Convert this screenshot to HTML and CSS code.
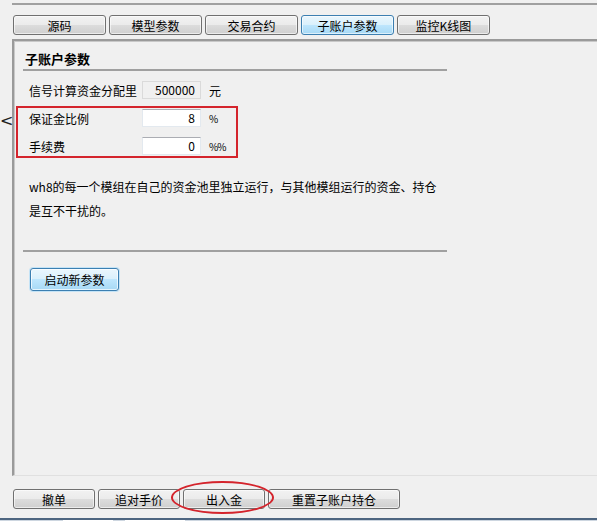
FILE: index.html
```html
<!DOCTYPE html>
<html lang="zh-CN">
<head>
<meta charset="utf-8">
<title>子账户参数</title>
<link rel="stylesheet" href="styles.css">
</head>
<body>
<div class="window">
  <div class="topline"></div>
  <div class="tabs">
    <button class="btn tab">源码</button>
    <button class="btn tab">模型参数</button>
    <button class="btn tab">交易合约</button>
    <button class="btn tab active">子账户参数</button>
    <button class="btn tab">监控K线图</button>
  </div>
  <div class="panel">
    <div class="section">
      <div class="heading">子账户参数</div>
      <div class="sep"></div>
      <div class="rows">
        <div class="row">
          <span class="label">信号计算资金分配里</span>
          <span class="input readonly">500000</span>
          <span class="unit">元</span>
        </div>
        <div class="row">
          <span class="label">保证金比例</span>
          <span class="input">8</span>
          <span class="unit pct">%</span>
        </div>
        <div class="row">
          <span class="label">手续费</span>
          <span class="input">0</span>
          <span class="unit pct">%%</span>
        </div>
      </div>
      <p class="desc">wh8的每一个模组在自己的资金池里独立运行，与其他模组运行的资金、持仓<br>是互不干扰的。</p>
      <div class="sep sep2"></div>
      <button class="btn blue">启动新参数</button>
    </div>
  </div>
  <div class="actions">
    <button class="btn act">撤单</button>
    <button class="btn act">追对手价</button>
    <button class="btn act">出入金</button>
    <button class="btn act wide">重置子账户持仓</button>
  </div>
  <div class="taskbar">
    <span class="seg s1"></span>
    <span class="seg s2"></span>
  </div>

  <span class="arrow">&lt;</span>
  <div class="redbox"></div>
  <div class="redellipse"></div>
</div>
</body>
</html>
```

FILE: styles.css
```css
* { box-sizing: border-box; }
html, body { margin: 0; padding: 0; }
body {
  background: #f0f0f0;
  font-family: "Noto Sans CJK SC", "Liberation Sans", sans-serif;
  font-size: 12px;
  color: #000;
}
.window {
  position: relative;
  width: 597px;
  height: 521px;
  overflow: hidden;
  padding-top: 3px;
}
.topline {
  margin-left: 12px;
  height: 2px;
  background: #a0a0a0;
}
.tabs {
  display: flex;
  gap: 3px;
  margin-top: 10px;
  padding-left: 13px;
}
.btn {
  font-family: inherit;
  font-size: 12px;
  color: #000;
  border: 1px solid #707070;
  border-radius: 3px;
  background: linear-gradient(#f2f2f2 0%, #ebebeb 50%, #dddddd 50%, #cfcfcf 100%);
  padding: 0;
  margin: 0;
  line-height: 17px;
  display: flex;
  align-items: center;
  justify-content: center;
  box-shadow: inset 0 0 0 1px rgba(255,255,255,0.6);
}
.tab { width: 93px; height: 20px; }
.tab.active {
  border-color: #3c7fb1;
  background: linear-gradient(#eaf6fd 0%, #d9f0fc 50%, #bee6fd 50%, #a7d9f5 100%);
}
.panel {
  margin-top: 4px;
  margin-left: 12px;
  height: 437px;
  width: 600px;
  border-top: 2px solid #9a9a9a;
  border-left: 2px solid #9a9a9a;
  border-bottom: 1px solid #e0e0e0;
  box-shadow: inset 1px 1px 0 #c8c8c8;
}
.section {
  padding-left: 9px;
  padding-top: 9px;
}
.heading {
  font-weight: bold;
  font-size: 13px;
  line-height: 18px;
  height: 18px;
  padding-left: 2px;
  margin-bottom: 1px;
}
.sep {
  width: 424px;
  height: 2px;
  background: #a0a0a0;
}
.rows {
  display: flex;
  flex-direction: column;
  gap: 10px;
  margin-top: 10px;
  padding-left: 6px;
}
.row {
  display: flex;
  align-items: center;
  height: 18px;
}
.label {
  width: 113px;
}
.input {
  width: 59px;
  height: 18px;
  background: #fff;
  border: 1px solid #e3e9ef;
  border-top-color: #abadb3;
  text-align: right;
  padding-right: 5px;
  line-height: 16px;
  font-size: 12px;
}
.input.readonly {
  background: #f0f0f0;
  border-color: #dadada;
}
.unit {
  margin-left: 8px;
}
.unit.pct {
  font-size: 10px;
  letter-spacing: -1px;
}
.desc {
  margin: 20px 0 0 0;
  padding-left: 6px;
  line-height: 24px;
  white-space: nowrap;
}
.sep2 {
  margin-top: 27px;
}
.btn.blue {
  margin-top: 16px;
  margin-left: 7px;
  width: 89px;
  height: 23px;
  border-color: #3c7fb1;
  background: linear-gradient(#eaf6fd 0%, #d9f0fc 50%, #bee6fd 50%, #a7d9f5 100%);
  box-shadow: inset 0 0 0 1px rgba(255,255,255,0.7), 0 0 0 1px #c4e3f6;
}
.actions {
  display: flex;
  gap: 3px;
  margin-top: 13px;
  padding-left: 13px;
}
.act { width: 82px; height: 20px; }
.act.wide { width: 132px; }
.taskbar {
  position: relative;
  margin-top: 9px;
  height: 4px;
  border-top: 2px solid #4d6580;
  background: #cdd6e0;
  display: flex;
}
.seg { display: block; height: 2px; background: #fff; }
.s1 { margin-left: 63px; width: 50px; }
.s2 { margin-left: 12px; width: 60px; }

.arrow {
  position: absolute;
  left: 0;
  top: 111px;
  font-family: "DejaVu Sans", sans-serif;
  font-size: 16px;
  line-height: 20px;
  color: #222;
}
.redbox {
  position: absolute;
  left: 16px;
  top: 106px;
  width: 222px;
  height: 52px;
  border: 2px solid #d4242c;
}
.redellipse {
  position: absolute;
  left: 171px;
  top: 481px;
  width: 103px;
  height: 33px;
  border: 2px solid #d4242c;
  border-radius: 50%;
}
```
